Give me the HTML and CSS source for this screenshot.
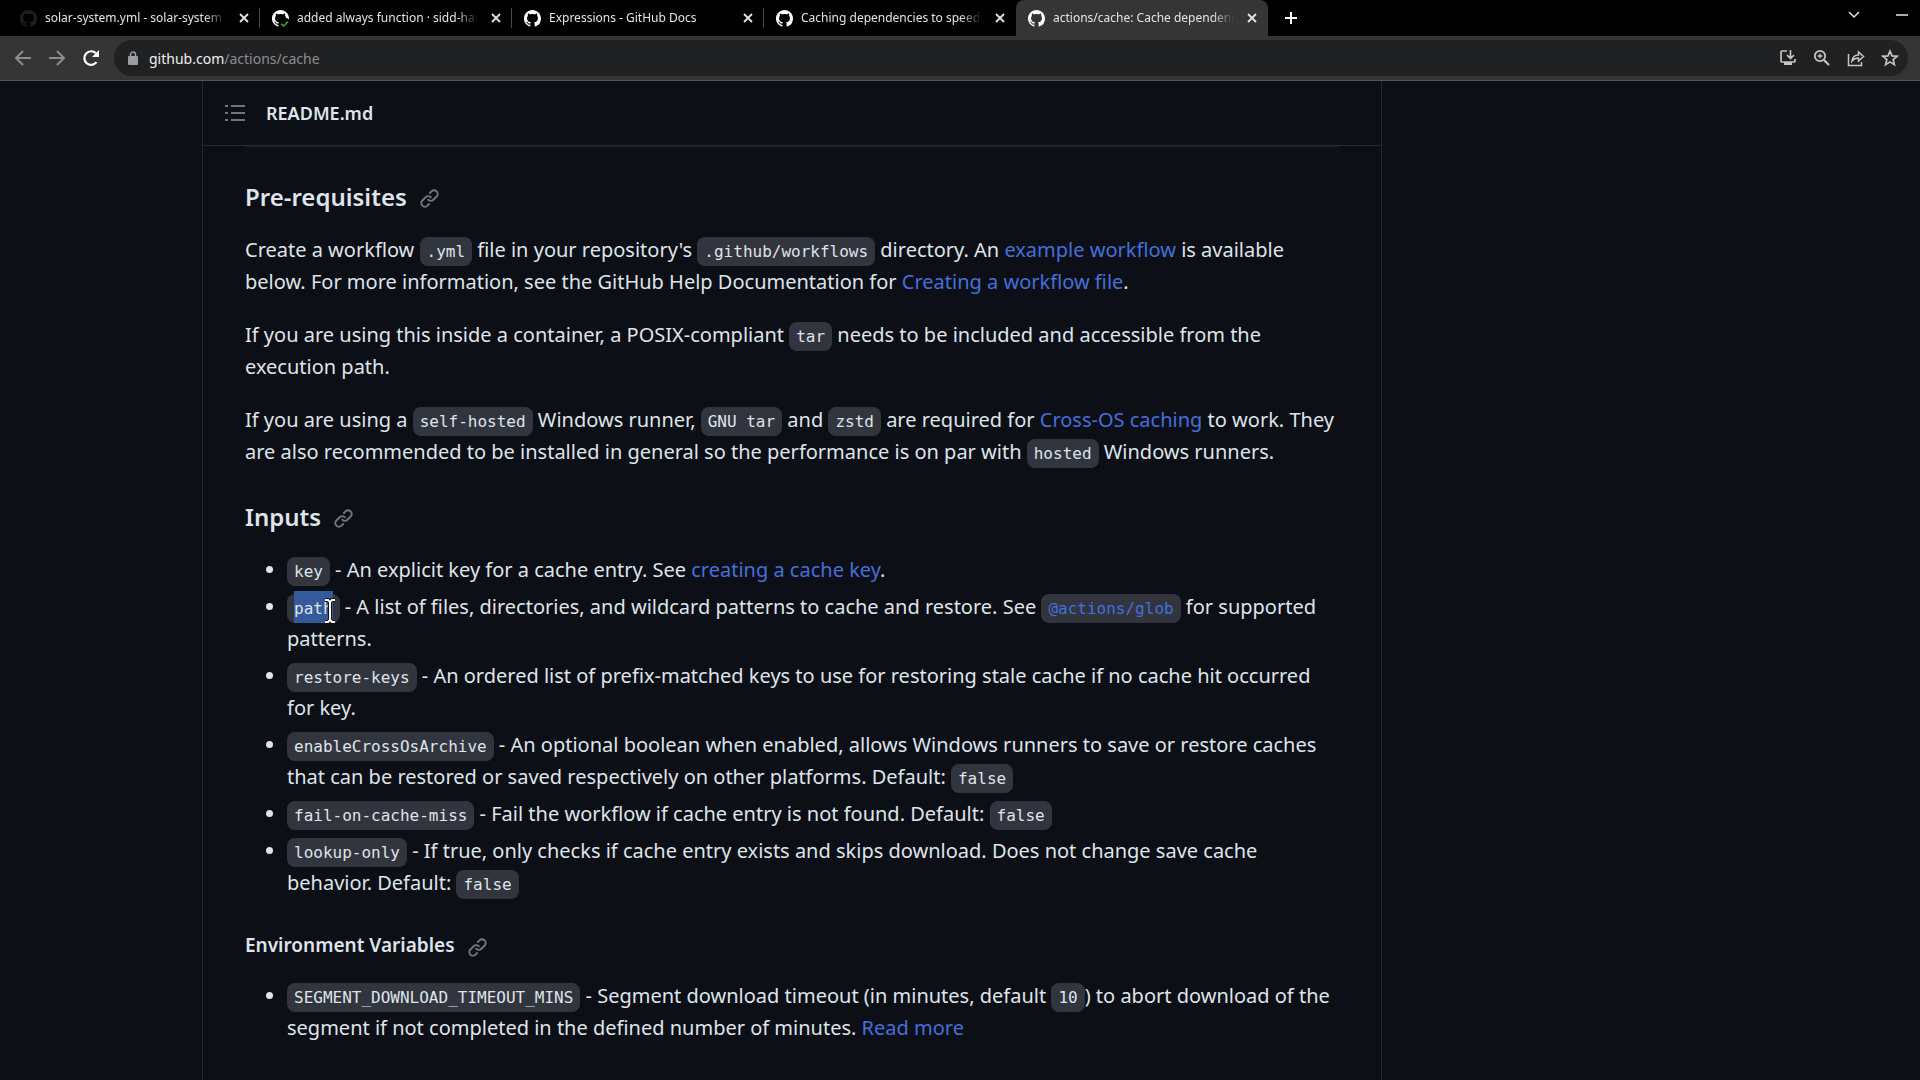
FILE: index.html
```html
<!DOCTYPE html>
<html lang="en">
<head>
  <meta charset="UTF-8">
  <meta name="viewport" content="width=device-width, initial-scale=1.0">
  <title>actions/cache: Cache dependencies</title>
  <link rel="stylesheet" href="styles.css">
</head>
<body>

  <!-- shared icons -->
  <svg class="sprite" aria-hidden="true">
    <symbol id="github" viewBox="0 0 16 16">
      <path d="M8 0C3.58 0 0 3.58 0 8c0 3.54 2.29 6.53 5.47 7.59.4.07.55-.17.55-.38 0-.19-.01-.82-.01-1.49-2.01.37-2.53-.49-2.69-.94-.09-.23-.48-.94-.82-1.13-.28-.15-.68-.52-.01-.53.63-.01 1.08.58 1.23.82.72 1.21 1.87.87 2.33.66.07-.52.28-.87.51-1.07-1.78-.2-3.64-.89-3.64-3.95 0-.87.31-1.59.82-2.15-.08-.2-.36-1.02.08-2.12 0 0 .67-.21 2.2.82.64-.18 1.32-.27 2-.27s1.36.09 2 .27c1.53-1.04 2.2-.82 2.2-.82.44 1.1.16 1.92.08 2.12.51.56.82 1.27.82 2.15 0 3.07-1.87 3.75-3.65 3.95.29.25.54.73.54 1.48 0 1.07-.01 1.93-.01 2.2 0 .21.15.46.55.38A8.01 8.01 0 0 0 16 8c0-4.42-3.58-8-8-8z"/>
    </symbol>
    <symbol id="close" viewBox="0 0 10 10">
      <path d="M1 1l8 8M9 1L1 9" fill="none" stroke="currentColor" stroke-width="1.8"/>
    </symbol>
    <symbol id="link" viewBox="0 0 16 16">
      <path d="m7.775 3.275 1.25-1.25a3.5 3.5 0 1 1 4.95 4.95l-2.5 2.5a3.5 3.5 0 0 1-4.95 0 .751.751 0 0 1 .018-1.042.751.751 0 0 1 1.042-.018 1.998 1.998 0 0 0 2.83 0l2.5-2.5a2.002 2.002 0 0 0-2.83-2.83l-1.25 1.25a.751.751 0 0 1-1.042-.018.751.751 0 0 1-.018-1.042Zm-4.69 9.64a1.998 1.998 0 0 0 2.83 0l1.25-1.25a.751.751 0 0 1 1.042.018.751.751 0 0 1 .018 1.042l-1.25 1.25a3.5 3.5 0 1 1-4.95-4.95l2.5-2.5a3.5 3.5 0 0 1 4.95 0 .751.751 0 0 1-.018 1.042.751.751 0 0 1-1.042.018 1.998 1.998 0 0 0-2.83 0l-2.5 2.5a1.998 1.998 0 0 0 0 2.83Z"/>
    </symbol>
  </svg>

  <header class="browser">
    <div class="tab-strip">
      <div class="tab">
        <svg class="favicon dim"><use href="#github"/></svg>
        <a class="tab-title" href="#">solar-system.yml - solar-system</a>
        <button class="tab-close" aria-label="Close tab"><svg><use href="#close"/></svg></button>
      </div>
      <div class="tab">
        <svg class="favicon" viewBox="0 0 16 16">
          <use href="#github"/>
          <circle cx="12" cy="12" r="5" fill="#000"/>
          <path d="M8.500 13l2.500 2 4-4" fill="none" stroke="#2f9a48" stroke-width="1.600"/>
        </svg>
        <a class="tab-title" href="#">added always function · sidd-har</a>
        <button class="tab-close" aria-label="Close tab"><svg><use href="#close"/></svg></button>
      </div>
      <div class="tab">
        <svg class="favicon"><use href="#github"/></svg>
        <a class="tab-title" href="#">Expressions - GitHub Docs</a>
        <button class="tab-close" aria-label="Close tab"><svg><use href="#close"/></svg></button>
      </div>
      <div class="tab">
        <svg class="favicon"><use href="#github"/></svg>
        <a class="tab-title" href="#">Caching dependencies to speed</a>
        <button class="tab-close" aria-label="Close tab"><svg><use href="#close"/></svg></button>
      </div>
      <div class="tab active">
        <svg class="favicon"><use href="#github"/></svg>
        <a class="tab-title" href="#">actions/cache: Cache dependenc</a>
        <button class="tab-close" aria-label="Close tab"><svg><use href="#close"/></svg></button>
      </div>
      <button class="new-tab" aria-label="New tab">
        <svg width="14" height="14" viewBox="0 0 14 14"><path d="M7 1v12M1 7h12" stroke="currentColor" stroke-width="2"/></svg>
      </button>
      <div class="window-buttons">
        <button aria-label="Search tabs">
          <svg width="12" height="12" viewBox="0 0 12 12"><path d="M1 3l5 5 5-5" fill="none" stroke="currentColor" stroke-width="1.500"/></svg>
        </button>
        <button aria-label="Minimize">
          <svg width="12" height="12" viewBox="0 0 12 12"><path d="M0 6h12" stroke="currentColor" stroke-width="1.500"/></svg>
        </button>
      </div>
    </div>

    <div class="toolbar">
      <button class="nav-button" aria-label="Back">
        <svg width="18" height="18" viewBox="0 0 18 18"><path d="M17 9H2M9 2L2 9l7 7" fill="none" stroke="currentColor" stroke-width="2"/></svg>
      </button>
      <button class="nav-button" aria-label="Forward">
        <svg width="18" height="18" viewBox="0 0 18 18"><path d="M1 9h15M9 2l7 7-7 7" fill="none" stroke="currentColor" stroke-width="2"/></svg>
      </button>
      <button class="nav-button reload" aria-label="Reload">
        <svg width="18" height="18" viewBox="0 0 18 18"><path d="M14.500 13.200A6.800 6.800 0 1 1 14 4.300" fill="none" stroke="currentColor" stroke-width="2.200"/><path d="M17 1v7h-7z" fill="currentColor"/></svg>
      </button>
      <div class="address">
        <svg class="lock" width="10" height="14" viewBox="0 0 10 14"><path d="M2.500 6V3.500a2.500 2.500 0 0 1 5 0V6" fill="none" stroke="currentColor" stroke-width="1.500"/><rect y="5" width="10" height="9" rx="1" fill="currentColor"/></svg>
        <a class="url" href="#">github.com<span>/actions/cache</span></a>
        <button aria-label="Install">
          <svg width="18" height="18" viewBox="0 0 18 18"><path d="M8 2H3a1 1 0 0 0-1 1v9a1 1 0 0 0 1 1h12a1 1 0 0 0 1-1v-2M11.500 1v8M8 6l3.500 3.500L15 6" fill="none" stroke="currentColor" stroke-width="1.700"/><path d="M5 13h8v3H5z" fill="currentColor"/></svg>
        </button>
        <button aria-label="Zoom">
          <svg width="18" height="18" viewBox="0 0 18 18"><circle cx="7" cy="7" r="5.200" fill="none" stroke="currentColor" stroke-width="1.800"/><path d="M11 11l5 5" stroke="currentColor" stroke-width="2.200"/><path d="M7 4.500v5M4.500 7h5" stroke="currentColor" stroke-width="1.300"/></svg>
        </button>
        <button aria-label="Share">
          <svg width="18" height="18" viewBox="0 0 18 18"><path d="M1.500 5v11.500h13V13M5 12c.500-4 2.500-6 6.500-6V3l5 4.500-5 4.500V9C8.500 9 6.500 10 5 12z" fill="none" stroke="currentColor" stroke-width="1.500"/></svg>
        </button>
        <button aria-label="Bookmark">
          <svg width="18" height="18" viewBox="0 0 18 18"><path d="M9 2.200l2 4.700 5 .400-3.800 3.300 1.200 5L9 12.900l-4.400 2.700 1.200-5L2 7.300l5-.400z" fill="none" stroke="currentColor" stroke-width="1.700"/></svg>
        </button>
      </div>
    </div>
  </header>

  <main class="readme">
    <div class="readme-header">
      <button class="outline-button" aria-label="Outline">
        <svg width="20" height="18" viewBox="0 0 20 18"><path d="M6 2h14M6 9h14M6 16h14M0 2h3M0 9h3M0 16h3" stroke="currentColor" stroke-width="2"/></svg>
      </button>
      <a href="#">README.md</a>
    </div>

    <article class="markdown">
      <h3>Pre-requisites <a class="anchor" href="#" aria-label="Pre-requisites"><svg><use href="#link"/></svg></a></h3>
      <p>Create a workflow <code>.yml</code> file in your repository's <code>.github/workflows</code> directory. An <a href="#">example workflow</a> is available below. For more information, see the GitHub Help Documentation for <a href="#">Creating a workflow file</a>.</p>
      <p>If you are using this inside a container, a POSIX-compliant <code>tar</code> needs to be included and accessible from the execution path.</p>
      <p>If you are using a <code>self-hosted</code> Windows runner, <code>GNU tar</code> and <code>zstd</code> are required for <a href="#">Cross-OS caching</a> to work. They are also recommended to be installed in general so the performance is on par with <code>hosted</code> Windows runners.</p>

      <h3>Inputs <a class="anchor" href="#" aria-label="Inputs"><svg><use href="#link"/></svg></a></h3>
      <ul>
        <li><code>key</code> - An explicit key for a cache entry. See <a href="#">creating a cache key</a>.</li>
        <li><code class="picked"><span class="selection">path</span><svg class="cursor" viewBox="0 0 12 26"><path d="M1 2h3l2 2 2-2h3M6 4v18M1 24h3l2-2 2 2h3" fill="none" stroke="#111" stroke-width="4"/><path d="M1 2h3l2 2 2-2h3M6 4v18M1 24h3l2-2 2 2h3" fill="none" stroke="#fff" stroke-width="2"/></svg></code> - A list of files, directories, and wildcard patterns to cache and restore. See <a href="#"><code>@actions/glob</code></a> for supported patterns.</li>
        <li><code>restore-keys</code> - An ordered list of prefix-matched keys to use for restoring stale cache if no cache hit occurred for key.</li>
        <li><code>enableCrossOsArchive</code> - An optional boolean when enabled, allows Windows runners to save or restore caches that can be restored or saved respectively on other platforms. Default: <code>false</code></li>
        <li><code>fail-on-cache-miss</code> - Fail the workflow if cache entry is not found. Default: <code>false</code></li>
        <li><code>lookup-only</code> - If true, only checks if cache entry exists and skips download. Does not change save cache behavior. Default: <code>false</code></li>
      </ul>

      <h4>Environment Variables <a class="anchor" href="#" aria-label="Environment Variables"><svg><use href="#link"/></svg></a></h4>
      <ul>
        <li><code>SEGMENT_DOWNLOAD_TIMEOUT_MINS</code> - Segment download timeout (in minutes, default <code>10</code>) to abort download of the segment if not completed in the defined number of minutes. <a href="#">Read more</a></li>
      </ul>
    </article>
  </main>

</body>
</html>
```

FILE: styles.css
```css
* {
  box-sizing: border-box;
}

body {
  margin: 0;
  min-height: 100vh;
  display: flex;
  flex-direction: column;
  background-color: #0c0f16;
  color: #dfe4ea;
  font-family: "Noto Sans", "Open Sans", sans-serif;
}

button {
  display: flex;
  align-items: center;
  justify-content: center;
  padding: 0;
  border: none;
  background: none;
  color: inherit;
  cursor: pointer;
}

a {
  color: inherit;
  text-decoration: none;
}

.sprite {
  display: none;
}

/* Tabs */
.tab-strip {
  display: flex;
  height: 36px;
  padding-left: 8px;
  background-color: #000;
  color: #e4e4e4;
}

.tab {
  display: flex;
  align-items: center;
  flex: 0 1 252px;
  min-width: 0;
  gap: 8px;
  padding: 0 10px 0 12px;
  background: linear-gradient(#4a4a4a, #4a4a4a) right center / 1px 20px no-repeat;
}

.tab:nth-child(4) {
  background: none;
}

.tab.active {
  background: #353535;
  border-radius: 8px 8px 0 0;
}

.favicon {
  flex: none;
  width: 17px;
  height: 17px;
  fill: #fff;
}

.favicon.dim {
  fill: #1d1f22;
}

.tab-title {
  flex: 1;
  overflow: hidden;
  white-space: nowrap;
  font-size: 12px;
  line-height: 20px;
  mask-image: linear-gradient(to right, #000 88%, transparent);
}

.tab-close {
  flex: none;
  width: 12px;
  height: 20px;
  margin-left: 4px;
}

.tab-close svg {
  width: 10px;
  height: 10px;
}

.new-tab {
  width: 46px;
  color: #fff;
}

.window-buttons {
  display: flex;
  gap: 36px;
  margin-left: auto;
  padding: 0 12px 6px 0;
}

/* Toolbar */
.toolbar {
  display: flex;
  align-items: center;
  height: 45px;
  padding: 0 12px 0 14px;
  background-color: #353535;
  border-bottom: 1px solid #51555d;
}

.nav-button {
  width: 18px;
  margin-right: 16px;
  color: #8c8c8c;
}

.nav-button.reload {
  margin-right: 14px;
  color: #fff;
}

.address {
  flex: 1;
  display: flex;
  align-items: center;
  gap: 16px;
  height: 36px;
  padding: 0 9px 0 14px;
  border-radius: 18px;
  background-color: #202123;
  color: #c4c4c4;
}

.lock {
  color: #9a9ca0;
}

.url {
  flex: 1;
  margin-left: -5px;
  color: #f0f0f0;
  font-size: 14px;
}

.url span {
  color: #8b8d91;
}

/* Readme box */
.readme {
  flex: 1;
  width: 100%;
  max-width: 1180px;
  margin-left: 202px;
  border: solid #252a32;
  border-width: 0 1px;
}

.readme-header {
  display: flex;
  align-items: center;
  gap: 21px;
  height: 65px;
  padding: 0 22px;
  border-bottom: 1px solid #252a32;
  font-size: 18px;
  font-weight: 600;
}

.outline-button {
  color: #6e7681;
}

.markdown {
  margin: 0 42px;
  padding: 33px 0;
  border-top: 1px solid #1b2027;
  font-size: 20px;
  line-height: 32px;
}

.markdown h3,
.markdown h4 {
  display: flex;
  align-items: center;
  gap: 12px;
  margin: 32px 0 21px;
  font-weight: 600;
}

.markdown h3:first-child {
  margin-top: 0;
}

.markdown h3 {
  font-size: 24px;
  line-height: 33px;
}

.markdown h4 {
  font-size: 19px;
  line-height: 28px;
}

.markdown p {
  margin: 0 0 21px;
}

.markdown ul {
  margin: 0;
  padding-left: 42px;
}

.markdown li + li {
  margin-top: 5px;
}

.markdown a {
  color: #446fdc;
}

.anchor {
  display: flex;
  padding-top: 4px;
}

.anchor svg {
  width: 21px;
  height: 21px;
  fill: #6e7681;
}

code {
  padding: 5px 7px;
  border-radius: 8px;
  background-color: #32353d;
  font-family: "DejaVu Sans Mono", monospace;
  font-size: 16px;
  line-height: 1;
}

/* Selected word with the text cursor over it */
.picked {
  position: relative;
}

.selection {
  padding: 8px 0 5px;
  background-color: #355a9b;
}

.cursor {
  position: absolute;
  right: 4px;
  bottom: -1px;
  width: 12px;
  height: 26px;
}
```
